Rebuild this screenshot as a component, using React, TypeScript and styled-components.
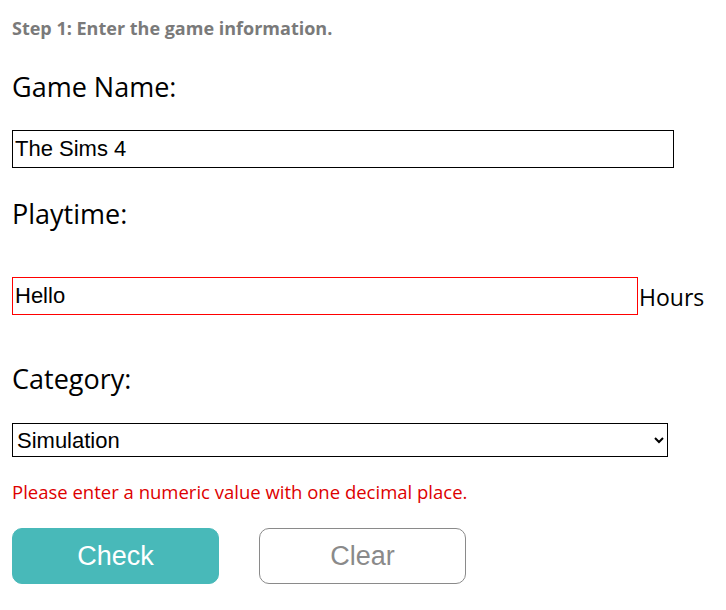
import React from "react";
import styled, { createGlobalStyle } from "styled-components";

const Global = createGlobalStyle`
  html, body { margin: 0; padding: 0; background: #fff; }
  body { font-family: "Open Sans", "Noto Sans", sans-serif; color: #000; }
`;

const Page = styled.form`
  padding: 14px 12px 20px 12px;
  display: flex;
  flex-direction: column;
`;

const Step = styled.h3`
  margin: 0;
  font-size: 18px;
  font-weight: 700;
  color: #7a7a7a;
  line-height: 28px;
`;

const Label = styled.label<{ $top: number; $bottom: number }>`
  display: block;
  font-size: 27px;
  line-height: 36px;
  margin: ${(p) => p.$top}px 0 ${(p) => p.$bottom}px 0;
`;

const TextInput = styled.input<{ $width: number; $invalid?: boolean }>`
  box-sizing: border-box;
  width: ${(p) => p.$width}px;
  height: 38px;
  border: 1px solid ${(p) => (p.$invalid ? "#ff0000" : "#000")};
  border-radius: 0;
  padding: 0 2px;
  font-family: "Liberation Sans", Arial, sans-serif;
  font-size: 22px;
  color: #000;
  outline: none;
  background: #fff;
`;

const InputRow = styled.div`
  display: flex;
  align-items: center;
`;

const Unit = styled.span`
  font-size: 23px;
  margin-left: 1px;
  line-height: 30px;
  padding-top: 2px;
`;

const Select = styled.select`
  box-sizing: border-box;
  width: 656px;
  height: 34px;
  border: 1px solid #000;
  border-radius: 0;
  padding: 0;
  font-family: "Liberation Sans", Arial, sans-serif;
  font-size: 22px;
  color: #000;
  background: #fff;
`;

const ErrorText = styled.p`
  margin: 23px 0 0 0;
  font-size: 18.5px;
  line-height: 24px;
  color: #dd0000;
`;

const Buttons = styled.div`
  display: flex;
  gap: 40px;
  margin-top: 24px;
`;

const Button = styled.button<{ $primary?: boolean }>`
  box-sizing: border-box;
  width: 207px;
  height: 56px;
  border-radius: 10px;
  font-family: "Liberation Sans", Arial, sans-serif;
  font-size: 27px;
  cursor: pointer;
  border: 1px solid ${(p) => (p.$primary ? "#48b9b9" : "#8a8a8a")};
  background: ${(p) => (p.$primary ? "#48b9b9" : "#fff")};
  color: ${(p) => (p.$primary ? "#fff" : "#8a8a8a")};
`;

export default function App() {
  return (
    <>
      <Global />
      <Page onSubmit={(e) => e.preventDefault()}>
        <Step>Step 1: Enter the game information.</Step>
        <Label $top={27} $bottom={25}>Game Name:</Label>
        <TextInput $width={662} defaultValue="The Sims 4" />
        <Label $top={28} $bottom={45}>Playtime:</Label>
        <InputRow>
          <TextInput $width={626} $invalid defaultValue="Hello" />
          <Unit>Hours</Unit>
        </InputRow>
        <Label $top={46} $bottom={26}>Category:</Label>
        <Select defaultValue="Simulation">
          <option>Simulation</option>
          <option>Action</option>
          <option>Adventure</option>
          <option>Strategy</option>
        </Select>
        <ErrorText>Please enter a numeric value with one decimal place.</ErrorText>
        <Buttons>
          <Button type="button" $primary>Check</Button>
          <Button type="button">Clear</Button>
        </Buttons>
      </Page>
    </>
  );
}
